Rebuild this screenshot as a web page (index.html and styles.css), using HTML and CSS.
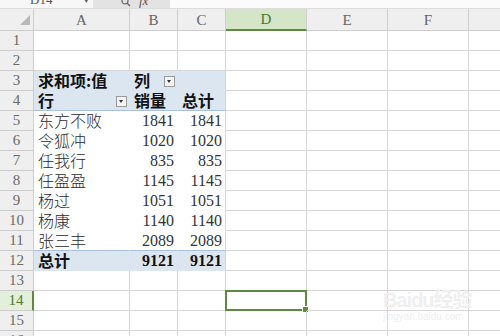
FILE: index.html
```html
<!DOCTYPE html>
<html lang="zh-CN">
<head>
    <meta charset="UTF-8">
    <meta name="viewport" content="width=device-width, initial-scale=1.0">
    <link rel="stylesheet" href="styles.css">
    <title>数据透视表</title>
</head>
<body>
    <div class="formula-bar">
        <div class="name-box">D14<span class="nb-arrow">▾</span></div>
        <div class="fx-box">
            <svg class="fx-search" width="10" height="10" viewBox="0 0 10 10"><circle cx="4" cy="4" r="3" fill="none" stroke="#666" stroke-width="1.2"/><path d="M6.2 6.2 9 9" stroke="#666" stroke-width="1.3"/></svg>
            <span class="fx">fx</span>
        </div>
        <div class="fx-input"></div>
    </div>

    <div class="sheet">
        <!-- column headers -->
        <div class="hd corner"><svg width="10" height="10" viewBox="0 0 10 10"><path d="M10 0V10H0Z" fill="#b8b8b8"/></svg></div>
        <div class="hd">A</div>
        <div class="hd">B</div>
        <div class="hd">C</div>
        <div class="hd hd-sel">D</div>
        <div class="hd">E</div>
        <div class="hd">F</div>
        <div class="hd last"></div>

        <!-- 1 -->
        <div class="rn">1</div><div class="c"></div><div class="c"></div><div class="c"></div><div class="c"></div><div class="c"></div><div class="c"></div><div class="c last"></div>
        <!-- 2 -->
        <div class="rn">2</div><div class="c"></div><div class="c"></div><div class="c"></div><div class="c"></div><div class="c"></div><div class="c"></div><div class="c last"></div>
        <!-- 3 -->
        <div class="rn">3</div>
        <div class="c pv pv-head b">求和项:值</div>
        <div class="c pv pv-head b">列<span class="dd"></span></div>
        <div class="c pv pv-head pv-end"></div>
        <div class="c"></div><div class="c"></div><div class="c"></div><div class="c last"></div>
        <!-- 4 -->
        <div class="rn">4</div>
        <div class="c pv pv-head pv-line b">行<span class="dd"></span></div>
        <div class="c pv pv-head pv-line b">销量</div>
        <div class="c pv pv-head pv-line pv-end b">总计</div>
        <div class="c"></div><div class="c"></div><div class="c"></div><div class="c last"></div>
        <!-- 5-11 -->
        <div class="rn">5</div><div class="c pv">东方不败</div><div class="c pv num">1841</div><div class="c pv pv-end num">1841</div><div class="c"></div><div class="c"></div><div class="c"></div><div class="c last"></div>
        <div class="rn">6</div><div class="c pv">令狐冲</div><div class="c pv num">1020</div><div class="c pv pv-end num">1020</div><div class="c"></div><div class="c"></div><div class="c"></div><div class="c last"></div>
        <div class="rn">7</div><div class="c pv">任我行</div><div class="c pv num">835</div><div class="c pv pv-end num">835</div><div class="c"></div><div class="c"></div><div class="c"></div><div class="c last"></div>
        <div class="rn">8</div><div class="c pv">任盈盈</div><div class="c pv num">1145</div><div class="c pv pv-end num">1145</div><div class="c"></div><div class="c"></div><div class="c"></div><div class="c last"></div>
        <div class="rn">9</div><div class="c pv">杨过</div><div class="c pv num">1051</div><div class="c pv pv-end num">1051</div><div class="c"></div><div class="c"></div><div class="c"></div><div class="c last"></div>
        <div class="rn">10</div><div class="c pv">杨康</div><div class="c pv num">1140</div><div class="c pv pv-end num">1140</div><div class="c"></div><div class="c"></div><div class="c"></div><div class="c last"></div>
        <div class="rn">11</div><div class="c pv pv-pre">张三丰</div><div class="c pv pv-pre num">2089</div><div class="c pv pv-pre pv-end num">2089</div><div class="c"></div><div class="c"></div><div class="c"></div><div class="c last"></div>
        <!-- 12 -->
        <div class="rn">12</div>
        <div class="c pv pv-total b">总计</div>
        <div class="c pv pv-total num b">9121</div>
        <div class="c pv pv-total pv-end num b">9121</div>
        <div class="c"></div><div class="c"></div><div class="c"></div><div class="c last"></div>
        <!-- 13 -->
        <div class="rn">13</div><div class="c"></div><div class="c"></div><div class="c"></div><div class="c"></div><div class="c"></div><div class="c"></div><div class="c last"></div>
        <!-- 14 -->
        <div class="rn rn-sel">14</div><div class="c"></div><div class="c"></div><div class="c"></div><div class="c active"><span class="handle"></span></div><div class="c"></div><div class="c"></div><div class="c last"></div>
        <!-- 15 -->
        <div class="rn">15</div><div class="c"></div><div class="c"></div><div class="c"></div><div class="c"></div><div class="c"></div><div class="c"></div><div class="c last"></div>
        <!-- 16 -->
        <div class="rn">16</div><div class="c"></div><div class="c"></div><div class="c"></div><div class="c"></div><div class="c"></div><div class="c"></div><div class="c last"></div>
    </div>

    <div class="watermark">
        <div class="wm-logo">Bai<span class="wm-paw">du</span>经验</div>
        <div class="wm-url">jingyan.baidu.com</div>
    </div>
</body>
</html>
```

FILE: styles.css
```css
body {
    margin: 0;
    width: 500px;
    height: 336px;
    overflow: hidden;
    background-color: white;
    font-family: "Noto Sans CJK SC", "Liberation Serif", serif;
    position: relative;
}

/* formula bar, mostly cut off at the top */
.formula-bar {
    display: flex;
    height: 8px;
    border-bottom: 1px solid #dcdcdc;
    overflow: hidden;
}
.name-box {
    width: 93px;
    background-color: #f7f7f7;
    font-family: "Liberation Serif", serif;
    font-size: 13px;
    color: #555;
    line-height: 1;
    margin-top: -7px;
    padding-left: 30px;
    box-sizing: border-box;
    position: relative;
}
.nb-arrow {
    position: absolute;
    left: 84px;
    top: 3px;
    font-size: 9px;
}
.fx-box {
    width: 77px;
    background-color: #e3e3e3;
    display: flex;
    align-items: flex-end;
    gap: 8px;
    padding-left: 28px;
    box-sizing: border-box;
}
.fx-search {
    margin-bottom: 1px;
}
.fx {
    font-family: "Liberation Serif", serif;
    font-style: italic;
    font-size: 13px;
    color: #555;
    line-height: 1;
    margin-bottom: 1px;
}
.fx-input {
    flex: 1;
    background-color: #fbfbfb;
}

/* grid */
.sheet {
    display: grid;
    grid-template-columns: 34px 96px 48px 48px 81px 81px 81px 31px;
    grid-template-rows: 22px repeat(16, 20px);
}
.hd, .rn {
    background-color: #efefef;
    color: #666;
    font-family: "Liberation Serif", serif;
    display: flex;
    align-items: center;
    justify-content: center;
    box-sizing: border-box;
    border-right: 1px solid #cdcdcd;
    border-bottom: 1px solid #cdcdcd;
}
.hd {
    font-size: 15px;
    padding-top: 1px;
}
.rn {
    font-size: 15px;
    color: #6a6a6a;
}
.corner {
    justify-content: flex-end;
    padding-right: 3px;
}
.hd.last {
    border-right: none;
}
.hd-sel {
    background-color: #d4e5c8;
    color: #4b7a30;
    border-bottom: 2px solid #5d8a40;
}
.rn-sel {
    background-color: #e3eedb;
    color: #4b7a30;
    border-right: 2px solid #5d8a40;
}

.c {
    box-sizing: border-box;
    border-right: 1px solid #d6d6d6;
    border-bottom: 1px solid #d6d6d6;
    font-size: 16px;
    font-weight: 300;
    line-height: 19px;
    color: #2a2a2a;
    padding: 0 4px;
    white-space: nowrap;
    position: relative;
}
.c.last {
    border-right: none;
}

/* pivot table */
.pv {
    border-right-color: transparent;
    border-bottom-color: transparent;
    background-color: white;
}
.pv-end {
    border-right-color: #d6d6d6;
}
.pv-head {
    background-color: #dce6f1;
}
.pv-line {
    border-bottom-color: #a9c1dd;
}
.pv-pre {
    border-bottom-color: #a9c1dd;
}
.pv-total {
    background-color: #dce6f1;
}
.b {
    font-weight: bold;
    color: #111;
}
.num {
    text-align: right;
    font-family: "Liberation Serif", serif;
    font-weight: normal;
    padding-right: 3px;
    color: #333;
}
.num.b {
    font-weight: bold;
    color: #111;
}
.dd {
    position: absolute;
    right: 1px;
    top: 5px;
    width: 9px;
    height: 9px;
    border: 1px solid #9a9a9a;
    background-color: #f4f4f4;
}
.pv-head.b .dd {
    right: 2px;
}
.dd::after {
    content: "";
    position: absolute;
    left: 2px;
    top: 3px;
    border-left: 2.5px solid transparent;
    border-right: 2.5px solid transparent;
    border-top: 3px solid #333;
}

/* active cell */
.active {
    border: 2px solid #5d8a40;
    margin: -1px 0 0 -1px;
}
.handle {
    position: absolute;
    right: -4px;
    bottom: -4px;
    width: 5px;
    height: 5px;
    background-color: #5d8a40;
    border: 1px solid white;
}

/* faint watermark */
.watermark {
    position: absolute;
    left: 383px;
    top: 289px;
    color: #efefef;
    font-family: "Liberation Sans", "Noto Sans CJK SC", sans-serif;
}
.wm-logo {
    font-size: 20px;
    font-weight: bold;
    line-height: 22px;
    letter-spacing: -1px;
}
.wm-url {
    font-size: 10px;
    line-height: 12px;
}
```
